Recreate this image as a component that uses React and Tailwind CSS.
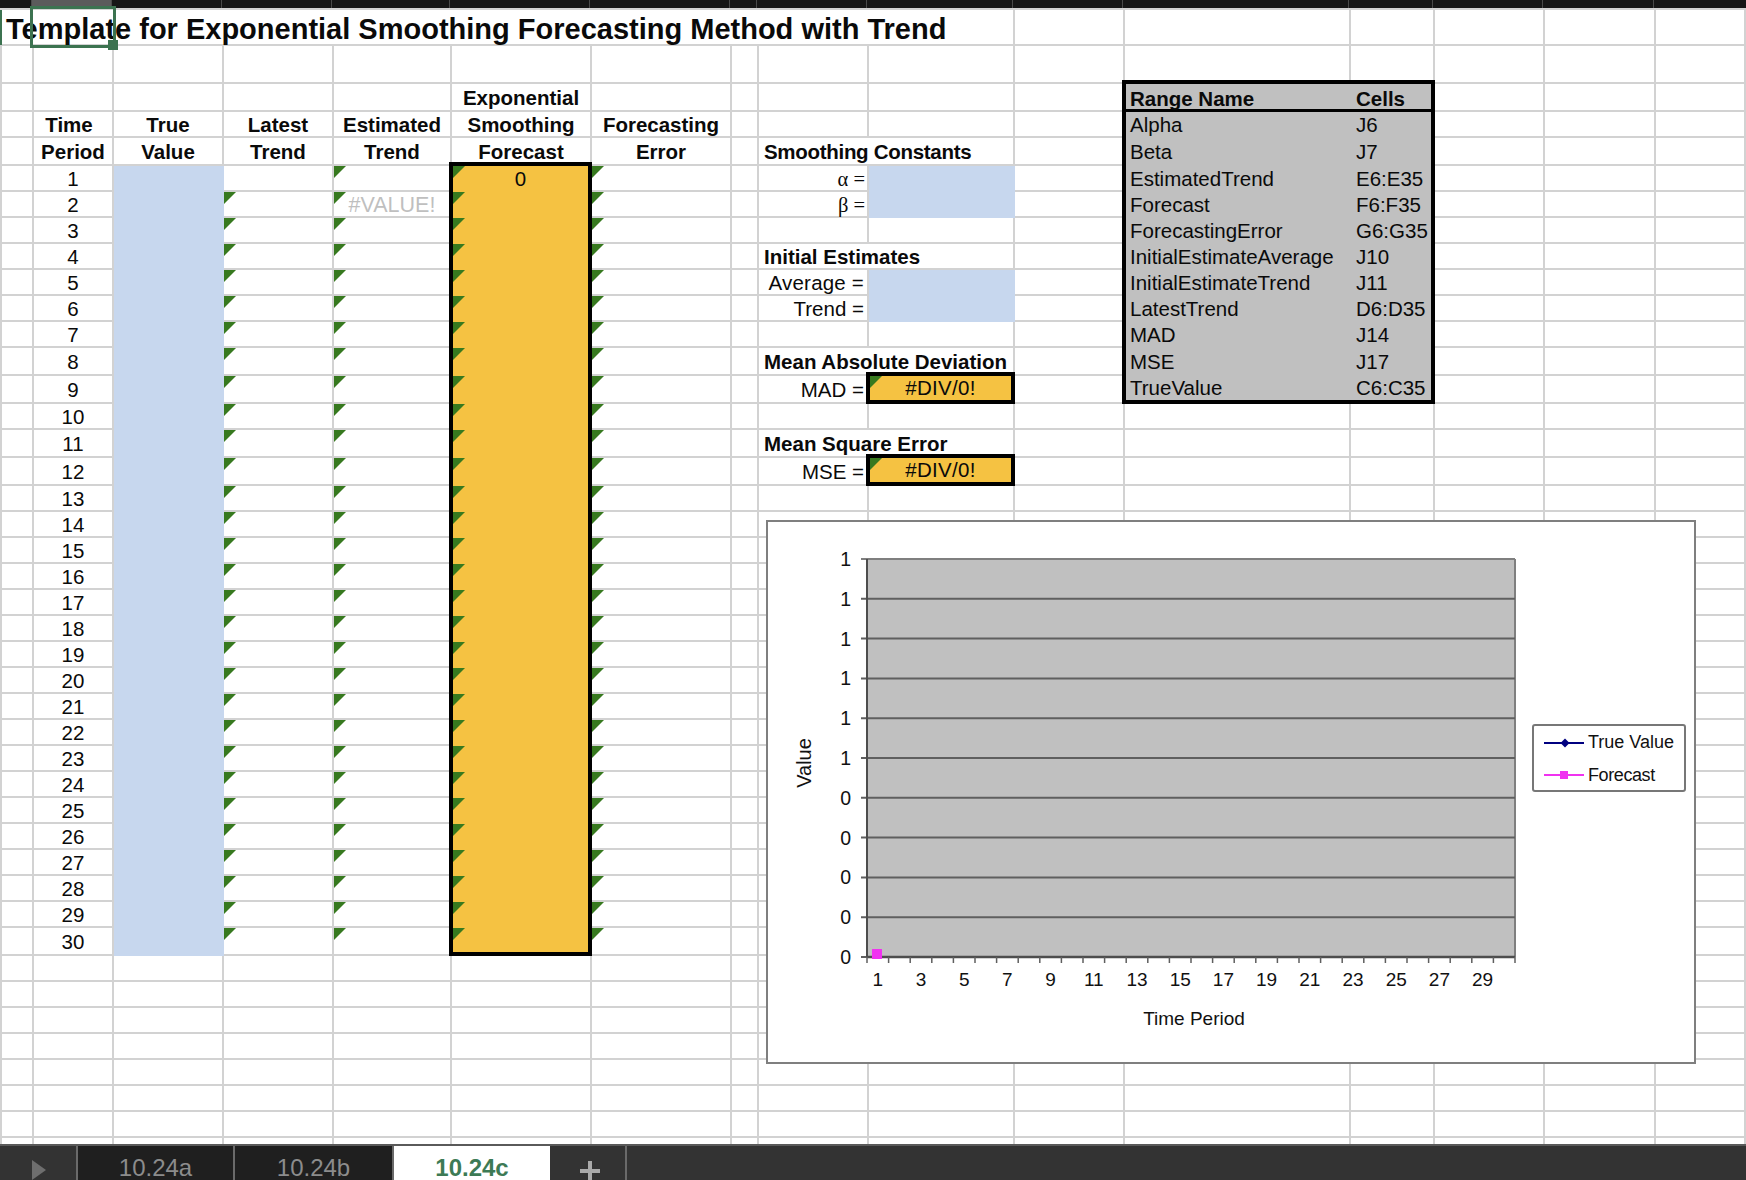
import React from "react";

const periods = Array.from({ length: 30 }, (_, i) => i + 1);
const fillerCells = Array.from({ length: 500 }, (_, i) => i);

const rangeNames = [
    ["Alpha", "J6"],
    ["Beta", "J7"],
    ["EstimatedTrend", "E6:E35"],
    ["Forecast", "F6:F35"],
    ["ForecastingError", "G6:G35"],
    ["InitialEstimateAverage", "J10"],
    ["InitialEstimateTrend", "J11"],
    ["LatestTrend", "D6:D35"],
    ["MAD", "J14"],
    ["MSE", "J17"],
    ["TrueValue", "C6:C35"],
];

const colsClass =
    "grid-cols-[32px_80px_110px_110px_118px_140px_140px_27px_110px_146px_110px_226px_84px_110px_111px_1fr]";

function Triangle() {
    return (
        <span className="absolute left-0 top-0 h-0 w-0 border-t-[12px] border-r-[12px] border-t-[#37791f] border-r-transparent" />
    );
}

function Cell({ className = "", children }) {
    return (
        <div
            className={
                "relative flex items-center justify-center whitespace-nowrap border-r-2 border-b-2 border-[#d2d2d2] pt-[2px] " +
                className
            }
        >
            {children}
        </div>
    );
}

function TrendColumn({ className, skipFirst, showValueError }) {
    return (
        <div className={"row-start-6 row-span-30 grid grid-rows-subgrid " + className}>
            {periods.map((n) => (
                <Cell key={n}>
                    {!(skipFirst && n === 1) && <Triangle />}
                    {showValueError && n === 2 && <span className="text-[21.5px] text-[#bfbfbf]">#VALUE!</span>}
                </Cell>
            ))}
        </div>
    );
}

function Chart() {
    const yLabels = ["1", "1", "1", "1", "1", "1", "0", "0", "0", "0", "0"];
    const ticks = Array.from({ length: 31 }, (_, i) => 867 + i * 21.6);

    return (
        <div className="absolute left-[767px] top-[521px] h-[542px] w-[928px]">
            <svg viewBox="767 521 928 542" className="block h-full w-full overflow-visible font-['Liberation_Sans',sans-serif]">
                <rect x="767" y="521" width="928" height="542" fill="#fff" stroke="#7f7f7f" strokeWidth="2" />
                <rect x="867" y="559" width="648" height="398" fill="#c0c0c0" />
                <line x1="1515" y1="559" x2="1515" y2="957" stroke="#7f7f7f" strokeWidth="2" />
                {yLabels.map((label, i) => {
                    const y = 559 + i * 39.8;
                    return (
                        <g key={i}>
                            <line x1="861" y1={y} x2="1515" y2={y} stroke={i === 0 ? "#7f7f7f" : "#5f5f5f"} strokeWidth="2" />
                            <text x="851" y={y + 7} textAnchor="end" fontSize="19.5" fill="#111">
                                {label}
                            </text>
                        </g>
                    );
                })}
                <line x1="867" y1="559" x2="867" y2="957" stroke="#4d4d4d" strokeWidth="2" />
                <line x1="867" y1="957" x2="1515" y2="957" stroke="#4d4d4d" strokeWidth="2.5" />
                {ticks.map((x) => (
                    <line key={x} x1={x} y1="957" x2={x} y2="963" stroke="#5f5f5f" strokeWidth="1.5" />
                ))}
                {periods
                    .filter((n) => n % 2 === 1)
                    .map((n) => (
                        <text key={n} x={867 + (n - 0.5) * 21.6} y="986" textAnchor="middle" fontSize="19" fill="#111">
                            {n}
                        </text>
                    ))}
                <rect x="872" y="949" width="10" height="10" fill="#f032f0" />
                <text x="1194" y="1025" textAnchor="middle" fontSize="19" fill="#111">
                    Time Period
                </text>
                <text x="804" y="763" textAnchor="middle" fontSize="20" fill="#111" transform="rotate(-90 804 763) translate(0 7)">
                    Value
                </text>
                <rect x="1533" y="725" width="152" height="66" rx="2" fill="#fff" stroke="#777" strokeWidth="2" />
                <line x1="1544" y1="743" x2="1584" y2="743" stroke="#000080" strokeWidth="2" />
                <polygon points="1565,738.5 1569.5,743 1565,747.5 1560.5,743" fill="#000080" />
                <text x="1588" y="747.5" fontSize="18" fill="#111">
                    True Value
                </text>
                <line x1="1544" y1="775" x2="1584" y2="775" stroke="#f032f0" strokeWidth="2" />
                <rect x="1560" y="771" width="8" height="8" fill="#f032f0" />
                <text x="1588" y="780.5" fontSize="18" letterSpacing="-0.4" fill="#111">
                    Forecast
                </text>
            </svg>
        </div>
    );
}

function SheetTabs() {
    return (
        <div className="flex h-[36px] overflow-hidden border-t-2 border-[#5a5a5a] bg-[#333333] text-[24px] leading-6 text-[#8c8c8c]">
            <div className="flex w-[78px] border-r-2 border-[#6a6a6a] pl-[32px] pt-[14px]">
                <span className="h-0 w-0 border-y-[10px] border-l-[14px] border-y-transparent border-l-[#6e6e6e]" />
            </div>
            <div className="w-[157px] border-r-2 border-[#6a6a6a] bg-[#1f1f1f] pt-[10px] text-center">10.24a</div>
            <div className="w-[159px] border-r-2 border-[#6a6a6a] bg-[#1f1f1f] pt-[10px] text-center">10.24b</div>
            <div className="-mt-[2px] w-[156px] bg-white pt-[12px] text-center font-bold text-[#3d7a55]">10.24c</div>
            <div className="w-[77px] border-r-2 border-[#6a6a6a] pl-[30px] pt-[15px]">
                <svg width="20" height="20" viewBox="0 0 20 20" className="block">
                    <path d="M10 0v20M0 10h20" stroke="#aaaaaa" strokeWidth="4" />
                </svg>
            </div>
        </div>
    );
}

export default function App() {
    return (
        <div className="relative flex h-[1180px] w-[1746px] flex-col overflow-hidden bg-white font-['Liberation_Sans',sans-serif] text-[20.5px] text-[#0a0a0a]">
            {/* column header strip */}
            <div className={"grid h-[8px] shrink-0 bg-[#161616] " + colsClass}>
                <div className="-ml-[2px] border-r border-[#4a4a4a]" />
                <div className="border-r border-[#4a4a4a] bg-[#5b5b5b]" />
                {Array.from({ length: 13 }, (_, i) => (
                    <div key={i} className="border-r border-[#4a4a4a]" />
                ))}
            </div>

            <div className="min-h-0 flex-1 overflow-hidden border-t-2 border-l-2 border-[#d2d2d2]">
                <div
                    className={
                        "grid grid-rows-[36px_38px_28px_26px_28px_repeat(7,26px)_28px_28px_26px_28px_28px_26px_repeat(16,26px)_28px_repeat(8,26px)] " +
                        colsClass
                    }
                >
                    <Cell className="col-start-1 col-span-10 row-start-1 justify-start border-r-2 pl-[4px] pt-[5px] text-[29px] font-bold">
                        Template for Exponential Smoothing Forecasting Method with Trend
                    </Cell>

                    <Cell className="col-start-6 row-start-3 font-bold">Exponential</Cell>
                    <Cell className="col-start-2 row-start-4 pr-2 font-bold">Time</Cell>
                    <Cell className="col-start-3 row-start-4 font-bold">True</Cell>
                    <Cell className="col-start-4 row-start-4 font-bold">Latest</Cell>
                    <Cell className="col-start-5 row-start-4 font-bold">Estimated</Cell>
                    <Cell className="col-start-6 row-start-4 font-bold">Smoothing</Cell>
                    <Cell className="col-start-7 row-start-4 font-bold">Forecasting</Cell>
                    <Cell className="col-start-2 row-start-5 pt-0 font-bold">Period</Cell>
                    <Cell className="col-start-3 row-start-5 pt-0 font-bold">Value</Cell>
                    <Cell className="col-start-4 row-start-5 pt-0 font-bold">Trend</Cell>
                    <Cell className="col-start-5 row-start-5 pt-0 font-bold">Trend</Cell>
                    <Cell className="col-start-6 row-start-5 pt-0 font-bold">Forecast</Cell>
                    <Cell className="col-start-7 row-start-5 pt-0 font-bold">Error</Cell>

                    <div className="col-start-2 row-start-6 row-span-30 grid grid-rows-subgrid">
                        {periods.map((n) => (
                            <Cell key={n}>{n}</Cell>
                        ))}
                    </div>
                    <div className="col-start-3 row-start-6 row-span-30 -ml-[2px] bg-[#c7d7ee]" />
                    <TrendColumn className="col-start-4" skipFirst />
                    <TrendColumn className="col-start-5" showValueError />
                    <div className="relative z-10 col-start-6 row-start-6 row-span-30 -ml-[3px] -mt-[4px] grid grid-rows-subgrid border-4 border-black bg-[#f5c242]">
                        {periods.map((n) => (
                            <div key={n} className="relative flex items-center justify-center">
                                <Triangle />
                                {n === 1 && "0"}
                            </div>
                        ))}
                    </div>
                    <TrendColumn className="col-start-7" />

                    <Cell className="col-start-9 col-span-2 row-start-5 justify-start pl-[5px] pt-0 font-bold tracking-[-0.3px]">Smoothing Constants</Cell>
                    <Cell className="col-start-9 row-start-6 justify-end pr-[2px] font-['Liberation_Serif',serif]">α =</Cell>
                    <Cell className="col-start-9 row-start-7 justify-end pr-[2px] font-['Liberation_Serif',serif]">β =</Cell>
                    <div className="col-start-10 row-start-6 row-span-2 -ml-[1px] bg-[#c7d7ee]" />

                    <Cell className="col-start-9 col-span-2 row-start-9 justify-start pl-[5px] font-bold">Initial Estimates</Cell>
                    <Cell className="col-start-9 row-start-10 justify-end pr-[3px] tracking-[0.2px]">Average =</Cell>
                    <Cell className="col-start-9 row-start-11 justify-end pr-[3px]">Trend =</Cell>
                    <div className="col-start-10 row-start-10 row-span-2 -ml-[1px] bg-[#c7d7ee]" />

                    <Cell className="col-start-9 col-span-2 row-start-13 justify-start pl-[5px] pt-0 font-bold">Mean Absolute Deviation</Cell>
                    <Cell className="col-start-9 row-start-14 justify-end pr-[3px] pt-0">MAD =</Cell>
                    <div className="relative z-10 col-start-10 row-start-14 -ml-[3px] -mt-[4px] flex items-center justify-center border-4 border-black bg-[#f5c242] pt-[1px] tracking-[0.3px]">
                        <Triangle />
                        #DIV/0!
                    </div>

                    <Cell className="col-start-9 col-span-2 row-start-16 justify-start pl-[5px] pt-0 font-bold">Mean Square Error</Cell>
                    <Cell className="col-start-9 row-start-17 justify-end pr-[3px] pt-0">MSE =</Cell>
                    <div className="relative z-10 col-start-10 row-start-17 -ml-[3px] -mt-[4px] flex items-center justify-center border-4 border-black bg-[#f5c242] pt-[1px] tracking-[0.3px]">
                        <Triangle />
                        #DIV/0!
                    </div>

                    {/* range name table */}
                    <div className="relative z-10 col-start-12 col-span-2 row-start-3 row-span-12 -ml-[3px] -mt-[4px] grid grid-cols-subgrid grid-rows-subgrid border-4 border-black bg-[#c0c0c0]">
                        <div className="col-span-2 grid grid-cols-subgrid border-b-[3px] border-black font-bold">
                            <div className="flex items-center pb-[2px] pl-[4px]">Range Name</div>
                            <div className="flex items-center pb-[2px] pl-[5px]">Cells</div>
                        </div>
                        {rangeNames.map(([name, cells]) => (
                            <React.Fragment key={name}>
                                <div className="flex items-center pl-[4px] pt-[1px] whitespace-nowrap">{name}</div>
                                <div className="flex items-center pl-[5px] pt-[1px] whitespace-nowrap">{cells}</div>
                            </React.Fragment>
                        ))}
                    </div>

                    {fillerCells.map((i) => (
                        <Cell key={i} />
                    ))}
                </div>
            </div>

            <SheetTabs />

            <Chart />

            {/* selected cell */}
            <div className="absolute left-0 top-[10px] h-[35px] w-[2px] bg-[#3c7350]" />
            <div className="absolute left-[30px] top-[6px] h-[42px] w-[86px] border-[3px] border-[#3c7350]" />
            <div className="absolute left-[108px] top-[40px] h-[10px] w-[10px] bg-[#3c7350]" />
        </div>
    );
}
